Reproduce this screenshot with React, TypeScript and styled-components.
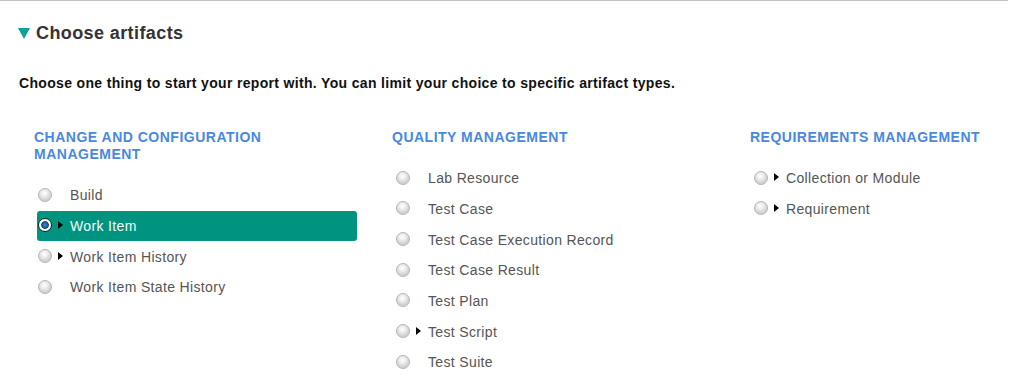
import React from 'react'
import styled, { createGlobalStyle } from 'styled-components'

interface Artifact {
  label: string
  expandable?: boolean
  selected?: boolean
}

interface Group {
  title: string[]
  items: Artifact[]
}

const groups: Group[] = [
  {
    title: ['Change and Configuration', 'Management'],
    items: [
      { label: 'Build' },
      { label: 'Work Item', expandable: true, selected: true },
      { label: 'Work Item History', expandable: true },
      { label: 'Work Item State History' },
    ],
  },
  {
    title: ['Quality Management'],
    items: [
      { label: 'Lab Resource' },
      { label: 'Test Case' },
      { label: 'Test Case Execution Record' },
      { label: 'Test Case Result' },
      { label: 'Test Plan' },
      { label: 'Test Script', expandable: true },
      { label: 'Test Suite' },
    ],
  },
  {
    title: ['Requirements Management'],
    items: [
      { label: 'Collection or Module', expandable: true },
      { label: 'Requirement', expandable: true },
    ],
  },
]

const GlobalStyle = createGlobalStyle`
  html, body {
    margin: 0;
    padding: 0;
    background: #fff;
    font-family: "Liberation Sans", Arial, sans-serif;
  }
`

const Page = styled('div')`
  width: 1008px;
  height: 384px;
  overflow: hidden;
  border-top: 1px solid #c4c4c4;
  box-sizing: border-box;
`

const SectionHeader = styled('div')`
  display: flex;
  align-items: center;
  gap: 6px;
  margin: 21px 0 0 18px;
  height: 22px;
`

const Twisty = styled('span')`
  width: 0;
  height: 0;
  flex: none;
  border-left: 6px solid transparent;
  border-right: 6px solid transparent;
  border-top: 11px solid #13a097;
  margin-top: 1px;
`

const Title = styled('h2')`
  margin: 0;
  font-size: 18px;
  line-height: 22px;
  font-weight: bold;
  letter-spacing: 0.4px;
  color: #333;
`

const Intro = styled('p')`
  margin: 31px 0 0 19px;
  font-size: 14px;
  line-height: 17px;
  font-weight: bold;
  letter-spacing: 0.33px;
  color: #111;
`

const Columns = styled('div')`
  display: grid;
  grid-template-columns: 358px 358px 1fr;
  margin: 37px 0 0 34px;
`

const Column = styled('section')`
  display: flex;
  flex-direction: column;
`

const GroupTitle = styled('h3')`
  margin: 0 0 17px;
  font-size: 14px;
  line-height: 17px;
  font-weight: bold;
  letter-spacing: 0.5px;
  text-transform: uppercase;
  color: #4a88e0;
`

const Row = styled('label')<{ $selected?: boolean }>`
  display: flex;
  align-items: center;
  width: 320px;
  height: 30.67px;
  margin-left: 3px;
  border-radius: 3px;
  background: ${({ $selected }) => ($selected ? '#009480' : 'transparent')};
  color: ${({ $selected }) => ($selected ? '#f2fbf9' : '#555')};
  font-size: 14px;
  letter-spacing: 0.35px;
`

const Radio = styled('span')<{ $checked?: boolean }>`
  width: 14px;
  height: 14px;
  margin-left: 1px;
  margin-top: -1px;
  border-radius: 50%;
  box-sizing: border-box;
  flex: none;
  border: 1px solid ${({ $checked }) => ($checked ? '#222' : '#b4b4b4')};
  background: ${({ $checked }) =>
    $checked
      ? 'radial-gradient(circle at 50% 50%, #3b8fd6 0, #1d5f9e 2.6px, #0f3358 3.4px, #f4f6f8 4.2px, #fff 6px)'
      : 'radial-gradient(circle at 45% 35%, #ffffff 0, #eeeeee 3px, #d2d2d2 6.5px)'};
`

const Arrow = styled('span')<{ $visible?: boolean }>`
  width: 0;
  height: 0;
  flex: none;
  margin: -2px 0 0 6px;
  border-top: 4px solid transparent;
  border-bottom: 4px solid transparent;
  border-left: 5px solid ${({ $visible }) => ($visible ? '#000' : 'transparent')};
`

const Label = styled('span')`
  margin-left: 7px;
  white-space: nowrap;
`

function ArtifactRow({ item }: { item: Artifact }) {
  return (
    <Row $selected={item.selected}>
      <Radio $checked={item.selected} />
      <Arrow $visible={item.expandable} />
      <Label>{item.label}</Label>
    </Row>
  )
}

export default function App() {
  return (
    <Page>
      <GlobalStyle />
      <SectionHeader>
        <Twisty />
        <Title>Choose artifacts</Title>
      </SectionHeader>
      <Intro>
        Choose one thing to start your report with. You can limit your choice to specific artifact
        types.
      </Intro>
      <Columns>
        {groups.map((group) => (
          <Column key={group.title.join(' ')}>
            <GroupTitle>
              {group.title.map((line, i) => (
                <React.Fragment key={line}>
                  {i > 0 && <br />}
                  {line}
                </React.Fragment>
              ))}
            </GroupTitle>
            {group.items.map((item) => (
              <ArtifactRow key={item.label} item={item} />
            ))}
          </Column>
        ))}
      </Columns>
    </Page>
  )
}
